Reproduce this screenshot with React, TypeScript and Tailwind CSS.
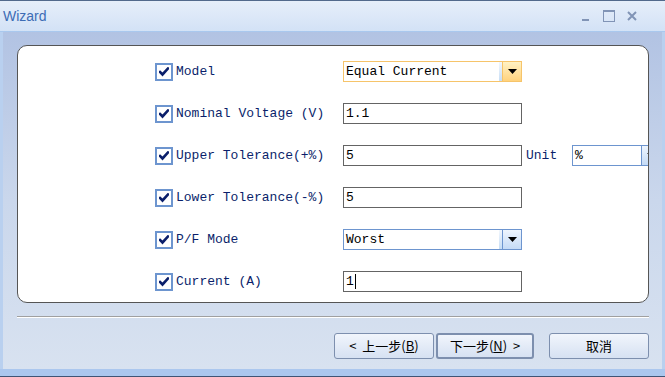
import React from "react";

const labelFont = { fontFamily: '"Liberation Mono", "Noto Sans CJK SC", monospace' };

function Check() {
  return (
    <div className="flex h-[18px] w-[18px] shrink-0 items-center justify-center border-2 border-[#6d95cf] bg-white">
      <svg width="10" height="10" viewBox="0 0 10 10">
        <path d="M1 5 L3.5 7.5 L9 1.5" stroke="#0b1f6b" strokeWidth="2.6" fill="none" strokeLinecap="square" />
      </svg>
    </div>
  );
}

function TextBox({ value, caret }: { value: string; caret?: boolean }) {
  return (
    <div className="flex h-[21px] w-[179px] shrink-0 items-center border border-[#646464] bg-white pl-[2px] text-[13px] text-black">
      <span>{value}</span>
      {caret && <span className="ml-px h-[15px] w-px bg-black" />}
    </div>
  );
}

function Arrow() {
  return (
    <svg width="9" height="6" viewBox="0 0 9 6">
      <path d="M0 0 H9 L4.5 5 Z" fill="#000" />
    </svg>
  );
}

function Combo({ value, hot }: { value: string; hot?: boolean }) {
  return (
    <div
      className={
        hot
          ? "flex h-[21px] w-[179px] shrink-0 items-stretch border border-[#f6c46a] bg-white text-[13px] text-black"
          : "flex h-[21px] w-[179px] shrink-0 items-stretch border border-[#6d95cf] bg-white text-[13px] text-black"
      }
    >
      <div className="flex flex-1 items-center pl-[2px]">{value}</div>
      <div className="w-[3px] bg-gradient-to-b from-[#f2f7fd] to-[#c6ddf5]" />
      <div
        className={
          hot
            ? "flex w-[19px] items-center justify-center border-l border-[#f6c46a] bg-gradient-to-b from-[#fff2c4] to-[#ffd27c]"
            : "flex w-[19px] items-center justify-center border-l border-[#6d95cf] bg-gradient-to-b from-[#eef5fe] to-[#c5dbf6]"
        }
      >
        <Arrow />
      </div>
    </div>
  );
}

function Row({ label, children }: { label: string; children: React.ReactNode }) {
  return (
    <div className="flex h-[21px] items-center">
      <div className="flex w-[188px] shrink-0 items-center gap-[3px]">
        <Check />
        <span className="whitespace-pre text-[13px] text-[#0b1f6b]">{label}</span>
      </div>
      {children}
    </div>
  );
}

function Btn({ children, primary }: { children: React.ReactNode; primary?: boolean }) {
  return (
    <button
      className={
        primary
          ? "flex h-[26px] w-[98px] items-center justify-center rounded-[3px] border-2 border-[#7d8fae] bg-gradient-to-b from-[#f1f5fc] to-[#d6e1f2] text-[13px] text-black"
          : "flex h-[26px] w-[100px] items-center justify-center rounded-[3px] border border-[#7d8fae] bg-gradient-to-b from-[#f1f5fc] to-[#d6e1f2] text-[13px] text-black"
      }
      style={{ fontFamily: '"Noto Sans CJK SC", "Liberation Mono", sans-serif' }}
    >
      {children}
    </button>
  );
}

export default function App() {
  return (
    <div className="flex h-[377px] w-[665px] flex-col overflow-hidden" style={labelFont}>
      {/* title bar */}
      <div className="flex h-[32px] shrink-0 items-center justify-between border-t border-b border-t-[#52698c] border-b-[#a9c8ee] bg-gradient-to-b from-[#e6eefa] to-[#d3e2f6] pl-[3px] pr-[28px]">
        <span className="text-[14px] text-[#3d6cb5]" style={{ fontFamily: '"Liberation Sans", sans-serif' }}>
          Wizard
        </span>
        <div className="flex items-center gap-[12px]">
          <svg width="10" height="12" viewBox="0 0 10 12">
            <rect x="1" y="9" width="7" height="2" fill="#8194b6" />
          </svg>
          <svg width="12" height="12" viewBox="0 0 12 12">
            <rect x="0.5" y="0.5" width="11" height="11" fill="none" stroke="#8194b6" />
            <rect x="0.5" y="0.5" width="11" height="1.5" fill="#8194b6" />
          </svg>
          <svg width="10" height="10" viewBox="0 0 10 10">
            <path d="M1 1 L9 9 M9 1 L1 9" stroke="#8194b6" strokeWidth="2" />
          </svg>
        </div>
      </div>

      {/* body */}
      <div className="flex flex-1 flex-col border-x-[3px] border-[#b9d0ef] bg-gradient-to-b from-[#b2c3e3] via-[#cad7ec] to-[#d8e2f0] pl-[14px] pr-[13px] pt-[13px]">
        <div className="h-[258px] w-[632px] overflow-hidden rounded-[10px] border border-[#555] bg-white pl-[137px] pt-[15px]">
          <div className="flex flex-col gap-[21px]">
            <Row label="Model">
              <Combo value="Equal Current" hot />
            </Row>
            <Row label="Nominal Voltage (V)">
              <TextBox value="1.1" />
            </Row>
            <Row label="Upper Tolerance(+%)">
              <TextBox value="5" />
              <span className="ml-[4px] w-[46px] shrink-0 text-[13px] text-[#0b1f6b]">Unit</span>
              <div className="flex h-[21px] w-[100px] shrink-0 items-stretch border border-[#6d95cf] bg-white text-[13px] text-black">
                <div className="flex w-[68px] items-center pl-[2px]">%</div>
                <div className="flex w-[19px] items-center justify-center border-l border-[#6d95cf] bg-gradient-to-b from-[#eef5fe] to-[#c5dbf6]">
                  <Arrow />
                </div>
              </div>
            </Row>
            <Row label="Lower Tolerance(-%)">
              <TextBox value="5" />
            </Row>
            <Row label="P/F Mode">
              <Combo value="Worst" />
            </Row>
            <Row label="Current (A)">
              <TextBox value="1" caret />
            </Row>
          </div>
        </div>

        <div className="mt-[13px] h-[2px] w-[632px] border-t border-b border-t-[#a0a0a0] border-b-white" />

        <div className="mt-[15px] flex w-[632px] justify-end">
          <Btn>
            &lt;&nbsp;&nbsp;上一步(<span className="underline">B</span>)
          </Btn>
          <div className="ml-[2px]">
            <Btn primary>
              下一步(<span className="underline">N</span>)&nbsp;&nbsp;&gt;
            </Btn>
          </div>
          <div className="ml-[15px]">
            <Btn>取消</Btn>
          </div>
        </div>
      </div>

      {/* bottom frame */}
      <div className="h-[8px] shrink-0 border-b border-[#3f5475] bg-[#abc7ee]" />
    </div>
  );
}
